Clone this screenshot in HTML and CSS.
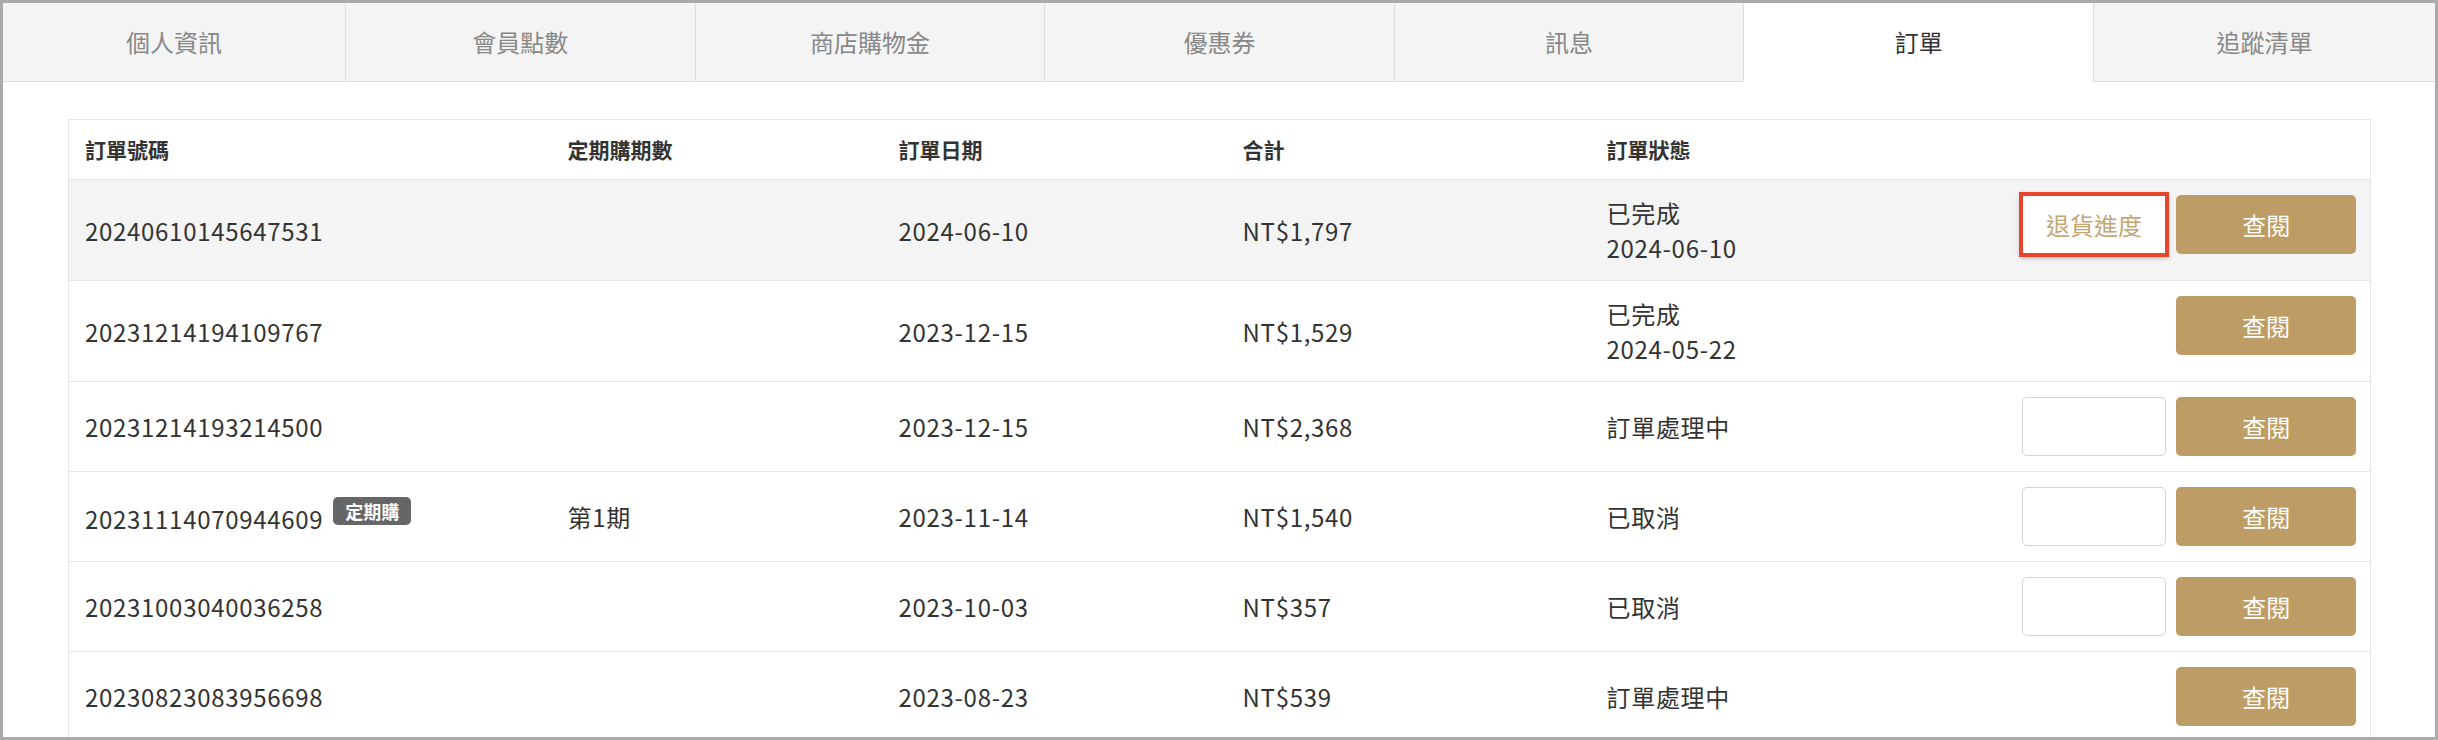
FILE: index.html
```html
<!DOCTYPE html>
<html lang="zh-Hant">
<head>
<meta charset="utf-8">
<title>訂單</title>
<link rel="stylesheet" href="styles.css">
</head>
<body>
<div class="frame">
  <nav class="tabs">
    <div class="tab edge">個人資訊</div>
    <div class="tab">會員點數</div>
    <div class="tab">商店購物金</div>
    <div class="tab">優惠券</div>
    <div class="tab">訊息</div>
    <div class="tab active">訂單</div>
    <div class="tab edge">追蹤清單</div>
  </nav>
  <main class="content">
    <table class="orders">
      <colgroup>
        <col class="c1"><col class="c2"><col class="c3"><col class="c4"><col class="c5"><col class="c6">
      </colgroup>
      <thead>
        <tr><th>訂單號碼</th><th>定期購期數</th><th>訂單日期</th><th>合計</th><th>訂單狀態</th><th></th></tr>
      </thead>
      <tbody>
        <tr class="hl">
          <td>20240610145647531</td><td></td><td>2024-06-10</td><td>NT$1,797</td>
          <td>已完成<br>2024-06-10</td>
          <td class="act"><div class="acts"><span class="ghost mark">退貨進度</span><span class="btn">查閱</span></div></td>
        </tr>
        <tr>
          <td>20231214194109767</td><td></td><td>2023-12-15</td><td>NT$1,529</td>
          <td>已完成<br>2024-05-22</td>
          <td class="act"><div class="acts"><span class="btn">查閱</span></div></td>
        </tr>
        <tr>
          <td>20231214193214500</td><td></td><td>2023-12-15</td><td>NT$2,368</td>
          <td>訂單處理中</td>
          <td class="act"><div class="acts"><span class="ghost"></span><span class="btn">查閱</span></div></td>
        </tr>
        <tr>
          <td>20231114070944609<span class="badge">定期購</span></td><td>第1期</td><td>2023-11-14</td><td>NT$1,540</td>
          <td>已取消</td>
          <td class="act"><div class="acts"><span class="ghost"></span><span class="btn">查閱</span></div></td>
        </tr>
        <tr>
          <td>20231003040036258</td><td></td><td>2023-10-03</td><td>NT$357</td>
          <td>已取消</td>
          <td class="act"><div class="acts"><span class="ghost"></span><span class="btn">查閱</span></div></td>
        </tr>
        <tr>
          <td>20230823083956698</td><td></td><td>2023-08-23</td><td>NT$539</td>
          <td>訂單處理中</td>
          <td class="act"><div class="acts"><span class="btn">查閱</span></div></td>
        </tr>
      </tbody>
    </table>
  </main>
</div>
</body>
</html>
```
FILE: styles.css
```css
* { box-sizing: border-box; }
html, body { margin: 0; padding: 0; background: #fff; }
body {
  font-family: "Noto Sans CJK TC", "Noto Sans", sans-serif;
  color: #333;
}
.frame {
  width: 2438px;
  height: 740px;
  border: 3px solid #aaa;
  overflow: hidden;
  background: #fff;
}
.tabs {
  display: flex;
  height: 79px;
}
.tab {
  flex: 1 1 0;
  display: flex;
  align-items: center;
  justify-content: center;
  background: #f4f4f4;
  color: #888;
  font-size: 24px;
  border-bottom: 1px solid #ddd;
  border-left: 1px solid #ddd;
  padding-bottom: 2px;
}
.tab.edge { flex: 0 0 342px; }
.tab:first-child { border-left: none; }
.tab.active {
  background: #fff;
  color: #333;
  border-bottom-color: #fff;
}
.content {
  padding: 37px 65px 0;
}
.orders {
  width: 100%;
  border-collapse: collapse;
  border: 1px solid #e5e5e5;
  table-layout: fixed;
}
.c1 { width: 483px; }
.c2 { width: 331px; }
.c3 { width: 344px; }
.c4 { width: 364px; }
.c5 { width: 415px; }
.c6 { width: 365px; }
.orders th {
  text-align: left;
  font-size: 21px;
  font-weight: 700;
  line-height: 29px;
  padding: 15px 16px;
  color: #333;
}
.orders td {
  font-size: 24px;
  letter-spacing: 0.7px;
  line-height: 35px;
  padding: 15px 16px;
  border-top: 1px solid #e5e5e5;
  vertical-align: middle;
  color: #333;
}
.orders tr.hl td { background: #f4f4f4; }
.orders td.act {
  padding-right: 14px;
  vertical-align: top;
  letter-spacing: 0;
}
.acts {
  display: flex;
  justify-content: flex-end;
  gap: 10px;
}
.btn {
  display: flex;
  align-items: center;
  justify-content: center;
  width: 180px;
  height: 59px;
  background: #bd9d65;
  color: #fff;
  border-radius: 5px;
  font-size: 24px;
}
.ghost {
  display: flex;
  align-items: center;
  justify-content: center;
  width: 145px;
  height: 59px;
  background: #fff;
  border: 1px solid #d4d4d4;
  border-radius: 5px;
  color: #c4a572;
  font-size: 24px;
}
.ghost.mark {
  border: none;
  border-radius: 0;
  outline: 4px solid #e8452c;
  outline-offset: -1px;
  box-shadow: 0 2px 5px 2px rgba(0,0,0,0.25);
}
.badge {
  display: inline-block;
  margin-left: 10px;
  padding: 0 12px;
  height: 28px;
  line-height: 28px;
  font-size: 18px;
  font-weight: 700;
  letter-spacing: 0;
  color: #fff;
  background: #666;
  border-radius: 5px;
  vertical-align: 10px;
}
```
